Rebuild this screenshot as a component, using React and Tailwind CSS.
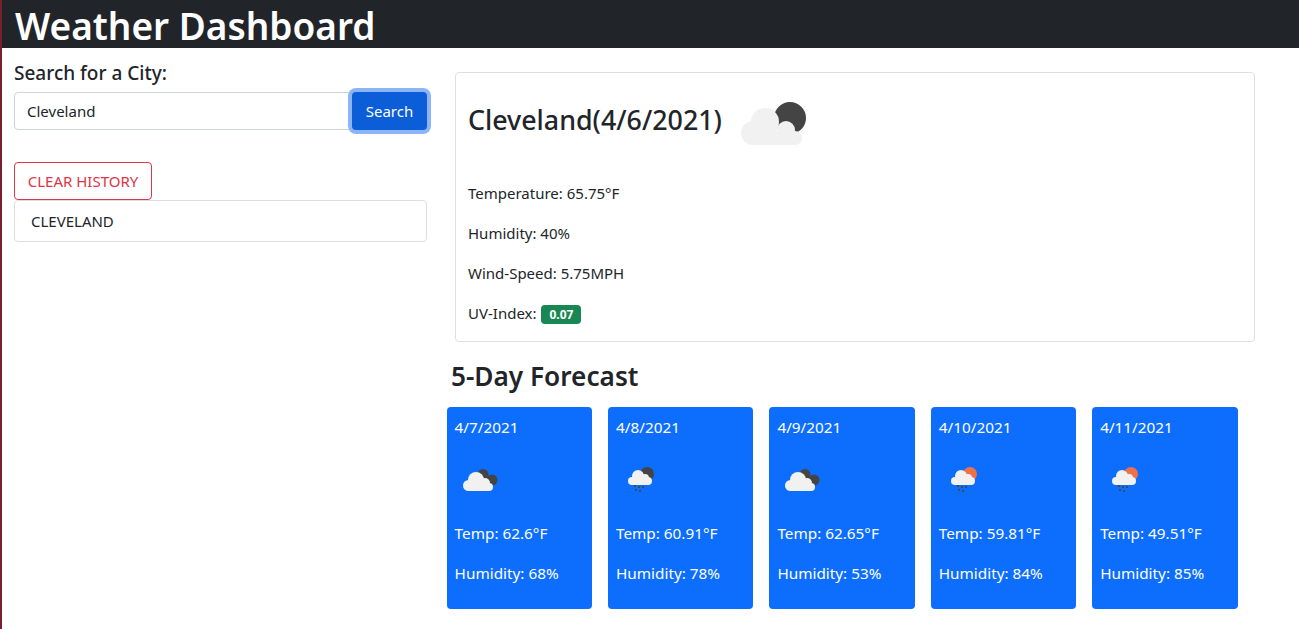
import React from 'react';

const font = "font-['Noto_Sans','Open_Sans',sans-serif]";

const forecast = [
  { date: '4/7/2021', temp: '62.6', humidity: '68', icon: 'cloud' },
  { date: '4/8/2021', temp: '60.91', humidity: '78', icon: 'rainNight' },
  { date: '4/9/2021', temp: '62.65', humidity: '53', icon: 'cloud' },
  { date: '4/10/2021', temp: '59.81', humidity: '84', icon: 'rainDay' },
  { date: '4/11/2021', temp: '49.51', humidity: '85', icon: 'rainDay' },
];

const BigIcon = () => (
  <svg viewBox="0 0 70 50" className="w-[70px] h-[50px]">
    <circle cx="52" cy="23" r="16" fill="#444444" />
    <g fill="#f1f1f1">
      <circle cx="15" cy="38" r="12" />
      <circle cx="27" cy="27" r="14" />
      <circle cx="48" cy="35" r="9" />
      <circle cx="57" cy="43" r="7" />
      <rect x="15" y="36" width="42" height="14" />
    </g>
  </svg>
);

const CloudIcon = () => (
  <svg viewBox="0 0 40 30" className="w-10 h-[30px]">
    <circle cx="24" cy="9.500" r="5.500" fill="#444444" />
    <circle cx="33" cy="15" r="5.500" fill="#444444" />
    <g fill="#f1f1f1">
      <circle cx="9.500" cy="20.500" r="5.500" />
      <circle cx="17" cy="15" r="8" />
      <circle cx="26" cy="18" r="5" />
      <circle cx="30" cy="22" r="4" />
      <rect x="9" y="18" width="21" height="8" />
    </g>
  </svg>
);

const RainIcon = ({ sun }) => (
  <svg viewBox="0 0 40 34" className="w-10 h-[34px]">
    <circle cx="27" cy="11" r="7" fill={sun} />
    <g fill="#f1f1f1">
      <circle cx="12" cy="18" r="4" />
      <circle cx="18" cy="13" r="6" />
      <circle cx="25" cy="15" r="4" />
      <circle cx="28" cy="18" r="4" />
      <rect x="12" y="15" width="16" height="7" />
    </g>
    <g fill="#3f4a5e">
      <rect x="14" y="22" width="2" height="2" />
      <rect x="18" y="23" width="2" height="2" />
      <rect x="22" y="23" width="2" height="2" />
      <rect x="15" y="26" width="2" height="2" />
      <rect x="19" y="27" width="2" height="2" />
    </g>
  </svg>
);

const ForecastIcon = ({ type }) => {
  if (type === 'cloud') return <CloudIcon />;
  if (type === 'rainNight') return <RainIcon sun="#444444" />;
  return <RainIcon sun="#f0704a" />;
};

const ForecastCard = ({ day }) => (
  <div className="w-[145.4px] h-[202px] bg-[#0d6efd] rounded text-white px-2 flex flex-col text-[15.3px]">
    <p className="mt-[9px] leading-[22px]">{day.date}</p>
    <div className="h-[30px] mt-[27px] flex items-center pl-[4px]">
      <ForecastIcon type={day.icon} />
    </div>
    <p className="mt-[27px] leading-[22px]">Temp: {day.temp}°F</p>
    <p className="mt-[18px] leading-[22px]">Humidity: {day.humidity}%</p>
  </div>
);

export default function App() {
  return (
    <div className={`${font} min-h-[629px] bg-white text-[#212529] border-l-2 border-[#7a1f30] overflow-hidden`}>
      <header className="h-12 bg-[#212529] text-white pl-[13px] pt-1 text-[37px] font-semibold leading-[44px]">
        Weather Dashboard
      </header>

      <div className="flex">
        {/* search side */}
        <aside className="w-[453px] pl-3 shrink-0">
          <h2 className="mt-[12px] text-[19px] font-medium leading-[26px]">Search for a City:</h2>
          <div className="flex mt-[6px] w-[413px]">
            <input
              readOnly
              value="Cleveland"
              className="flex-1 min-w-0 h-[38px] border border-[#ced4da] rounded-l px-3 text-[15px] outline-none"
            />
            <button className="h-[38px] w-[75px] -ml-px bg-[#0b5ed7] text-white text-[15px] rounded ring-4 ring-[#8db4f5] relative">
              Search
            </button>
          </div>
          <button className="mt-[32px] h-[38px] w-[138px] border border-[#dc3545] rounded text-[#dc3545] text-[15px] block">
            CLEAR HISTORY
          </button>
          <div className="w-[413px] h-[42px] border border-[#dfdfdf] rounded px-4 flex items-center text-[15px]">
            CLEVELAND
          </div>
        </aside>

        {/* results side */}
        <main className="flex-1 min-w-0">
          <section className="mt-6 w-[800px] h-[270px] border border-[#dfdfdf] rounded px-3 text-[15px]">
            <div className="flex items-center mt-[22px] h-[50px]">
              <h2 className="text-[26.8px] font-medium leading-[50px]">Cleveland(4/6/2021)</h2>
              <div className="ml-[16px]">
                <BigIcon />
              </div>
            </div>
            <p className="mt-[37px] leading-[22px]">Temperature: 65.75°F</p>
            <p className="mt-[18px] leading-[22px]">Humidity: 40%</p>
            <p className="mt-[18px] leading-[22px]">Wind-Speed: 5.75MPH</p>
            <p className="mt-[18px] leading-[22px]">
              UV-Index:{' '}
              <span className="inline-block ml-px bg-[#198754] text-white text-[12px] font-bold rounded px-2 leading-[19px]">0.07</span>
            </p>
          </section>
          <h3 className="mt-[15px] ml-[-4px] text-[26.2px] font-semibold leading-[38px]">5-Day Forecast</h3>
          <div className="flex gap-4 mt-[12px] ml-[-8.4px]">
            {forecast.map((day) => (
              <ForecastCard key={day.date} day={day} />
            ))}
          </div>
        </main>
      </div>
    </div>
  );
}
